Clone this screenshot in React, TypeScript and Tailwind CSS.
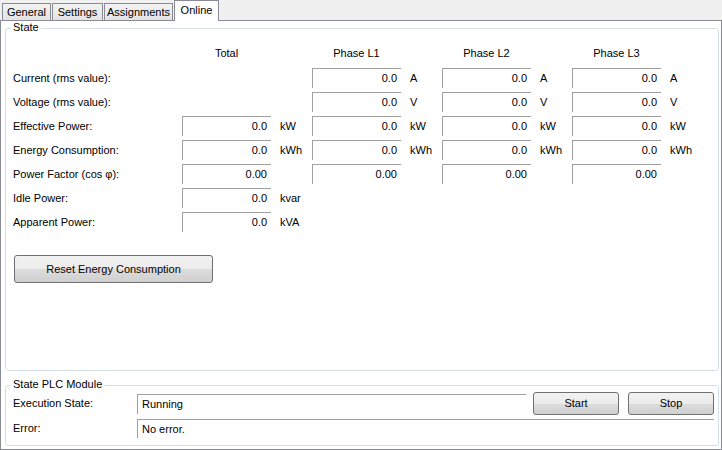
import React from "react";

type Cell = { value: string; unit?: string } | null;

type Row = {
  label: string;
  total: Cell;
  phase: Cell;
};

const rows: Row[] = [
  { label: "Current (rms value):", total: null, phase: { value: "0.0", unit: "A" } },
  { label: "Voltage (rms value):", total: null, phase: { value: "0.0", unit: "V" } },
  { label: "Effective Power:", total: { value: "0.0", unit: "kW" }, phase: { value: "0.0", unit: "kW" } },
  { label: "Energy Consumption:", total: { value: "0.0", unit: "kWh" }, phase: { value: "0.0", unit: "kWh" } },
  { label: "Power Factor (cos φ):", total: { value: "0.00" }, phase: { value: "0.00" } },
  { label: "Idle Power:", total: { value: "0.0", unit: "kvar" }, phase: null },
  { label: "Apparent Power:", total: { value: "0.0", unit: "kVA" }, phase: null },
];

const tabs = [
  { name: "General", w: "w-[49px]" },
  { name: "Settings", w: "w-[51px]" },
  { name: "Assignments", w: "w-[69px]" },
];

const btn =
  "flex items-center justify-center rounded-[3px] border border-[#707070] bg-[linear-gradient(to_bottom,#f2f2f2_0%,#ebebeb_50%,#dddddd_51%,#cfcfcf_100%)] text-black";

function TextBox({ value, className }: { value: string; className: string }) {
  return (
    <div
      className={`flex items-center border-t border-l border-[#a0a0a0] bg-white leading-none ${className}`}
    >
      {value}
    </div>
  );
}

function ValueCell({ cell }: { cell: Cell }) {
  return (
    <div className="flex w-[130px] items-center">
      {cell && (
        <>
          <TextBox value={cell.value} className="h-[20px] w-[89px] justify-end pr-[4px]" />
          <span className="ml-[9px]">{cell.unit}</span>
        </>
      )}
    </div>
  );
}

function GroupBox({
  title,
  className,
  children,
}: {
  title: string;
  className: string;
  children: React.ReactNode;
}) {
  return (
    <div className={`relative rounded-[3px] border border-[#d5dfe5] ${className}`}>
      <span className="absolute left-[5px] top-[-8px] bg-white px-[2px] leading-[13px]">{title}</span>
      {children}
    </div>
  );
}

export default function App() {
  return (
    <div className="flex h-[450px] w-[722px] flex-col bg-[#f0f0f0] font-['Liberation_Sans',Arial,sans-serif] text-[11px] text-black">
      {/* tab strip */}
      <div className="flex h-[20px] items-end gap-[1px] pl-[2px]">
        {tabs.map((t) => (
          <div
            key={t.name}
            className={`flex h-[17px] items-center justify-center border border-b-0 border-[#898c95] bg-[linear-gradient(to_bottom,#f3f3f3,#e3e3e3)] pt-[1px] ${t.w}`}
          >
            {t.name}
          </div>
        ))}
        <div className="relative z-10 mb-[-1px] flex h-[21px] w-[45px] items-center justify-center border border-b-0 border-[#898c95] bg-white pb-[1px]">
          Online
        </div>
      </div>

      {/* tab page */}
      <div className="flex flex-1 flex-col border border-[#898c95] bg-white pb-[3px] pl-[4px] pr-[2px] pt-[7px]">
        <GroupBox title="State" className="flex h-[343px] flex-col pl-[7px] pt-[16px]">
          <div className="flex h-[16px] items-center">
            <div className="w-[169px]" />
            {["Total", "Phase L1", "Phase L2", "Phase L3"].map((h) => (
              <div key={h} className="w-[130px]">
                <div className="w-[89px] text-center">{h}</div>
              </div>
            ))}
          </div>
          <div className="mt-[7px] flex flex-col gap-[4px]">
            {rows.map((r) => (
              <div key={r.label} className="flex h-[20px] items-center">
                <div className="w-[169px]">{r.label}</div>
                <ValueCell cell={r.total} />
                <ValueCell cell={r.phase} />
                <ValueCell cell={r.phase} />
                <ValueCell cell={r.phase} />
              </div>
            ))}
          </div>
          <button className={`${btn} ml-[1px] mt-[23px] h-[28px] w-[199px]`}>Reset Energy Consumption</button>
        </GroupBox>

        <GroupBox title="State PLC Module" className="mt-[14px] flex h-[61px] flex-col gap-[4px] pl-[7px] pt-[6px]">
          <div className="flex h-[23px] items-center">
            <div className="w-[124px]">Execution State:</div>
            <TextBox value="Running" className="h-[20px] w-[389px] pl-[4px]" />
            <button className={`${btn} ml-[7px] h-[23px] w-[86px]`}>Start</button>
            <button className={`${btn} ml-[9px] h-[23px] w-[86px]`}>Stop</button>
          </div>
          <div className="flex h-[19px] items-center">
            <div className="w-[124px]">Error:</div>
            <TextBox value="No error." className="h-[19px] w-[577px] pl-[4px]" />
          </div>
        </GroupBox>
      </div>
    </div>
  );
}
